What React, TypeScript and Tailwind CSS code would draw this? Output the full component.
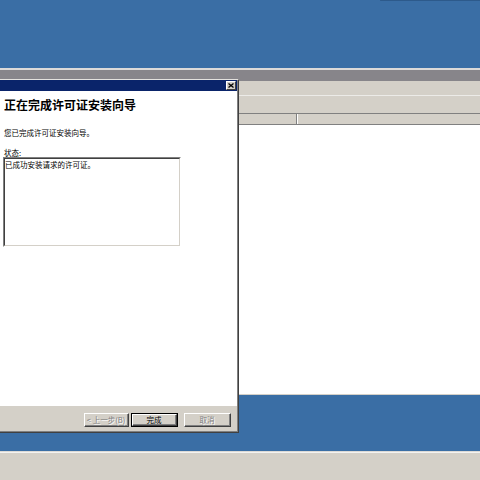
import React from "react";

function Btn({
  label,
  disabled,
  def,
  className,
}: {
  label: string;
  disabled?: boolean;
  def?: boolean;
  className: string;
}) {
  const text = disabled
    ? "text-[#808080] [text-shadow:1px_1px_0_#ffffff]"
    : "text-black";
  const face = (
    <div className="h-full w-full border-t border-l border-t-white border-l-white border-r border-b border-r-[#404040] border-b-[#404040]">
      <div className="h-full w-full flex items-center justify-center border-r border-b border-r-[#808080] border-b-[#808080]">
        <span className={"text-[7.5px] leading-[9px] whitespace-nowrap " + text}>{label}</span>
      </div>
    </div>
  );
  return (
    <div
      className={
        "h-[14px] bg-[#d4d0c8] " +
        (def ? "border border-black " : "") +
        className
      }
    >
      {face}
    </div>
  );
}

export default function App() {
  return (
    <div className="relative w-[480px] h-[480px] overflow-hidden bg-[#3a6ea5] font-['Noto_Sans_CJK_SC','Noto_Sans',sans-serif]">
      <div className="absolute top-0 left-[380px] w-[100px] h-[1px] bg-[#2d5a8b] rounded-l-full" />

      {/* background window */}
      <div className="absolute left-0 top-[68px] w-[480px] flex flex-col">
        <div className="h-[2px] bg-[#dcdad8]" />
        <div className="h-[11px] bg-[#87858a]" />
        <div className="h-[14px] bg-[#d4d0c8]" />
        <div className="h-[1px] bg-[#ecebe8]" />
        <div className="h-[17px] bg-[#d4d0c8]" />
        <div className="h-[1px] bg-[#808080]" />
        <div className="h-[10px] bg-[#d4d0c8] flex">
          <div className="w-[297px] h-full border-r border-r-[#808080]" />
          <div className="w-[1px] h-full bg-white" />
        </div>
        <div className="h-[1px] bg-[#808080]" />
        <div className="h-[269px] bg-white" />
        <div className="h-[1px] bg-[#d4d0c8]" />
      </div>

      {/* taskbar */}
      <div className="absolute left-0 top-[451px] w-[480px] h-[29px] flex flex-col bg-[#d4d0c8]">
        <div className="h-[1px] bg-[#dcdad6]" />
        <div className="h-[1px] bg-[#f4f3f1]" />
      </div>

      {/* dialog */}
      <div className="absolute left-0 top-[79px] w-[239px] h-[354px] border-t border-t-[#e4e2de] border-r border-r-[#404040] border-b border-b-[#404040]">
        <div className="h-full flex flex-col bg-[#d4d0c8] border-r border-r-[#808080] border-b border-b-[#808080]">
          <div className="h-[11px] bg-[#0a246a] flex items-center justify-end pr-[1px]">
            <div className="w-[10px] h-[9px] bg-[#d4d0c8] border-t border-l border-t-white border-l-white border-r border-b border-r-[#404040] border-b-[#404040] flex items-center justify-center">
              <svg width="6" height="5" viewBox="0 0 6 5">
                <path d="M0.5 0.5 L5.5 4.5 M5.5 0.5 L0.5 4.5" stroke="#000" strokeWidth="1.3" />
              </svg>
            </div>
          </div>

          <div className="h-[315px] bg-white flex flex-col pl-[4px] pt-[8px] text-black">
            <div className="text-[12px] leading-[12px] font-bold whitespace-nowrap">正在完成许可证安装向导</div>
            <div className="mt-[17px] text-[7.5px] leading-[9px] whitespace-nowrap">您已完成许可证安装向导。</div>
            <div className="mt-[11px] text-[7.5px] leading-[9px] whitespace-nowrap">状态:</div>
            <div className="-ml-[1px] w-[178px] h-[90px] border-t border-l border-t-[#808080] border-l-[#808080] border-r border-b border-r-white border-b-white">
              <div className="h-full border-t border-l border-t-[#404040] border-l-[#404040] border-r border-b border-r-[#d4d0c8] border-b-[#d4d0c8] pt-[1px]">
                <div className="text-[7.5px] leading-[9px] whitespace-nowrap">已成功安装请求的许可证。</div>
              </div>
            </div>
          </div>

          <div className="flex-1 flex items-start pt-[7px]">
            <Btn label="< 上一步(B)" disabled className="w-[45px] ml-[84px]" />
            <Btn label="完成" def className="w-[47px] ml-[2px]" />
            <Btn label="取消" disabled className="w-[47px] ml-[6px]" />
          </div>
        </div>
      </div>
    </div>
  );
}
